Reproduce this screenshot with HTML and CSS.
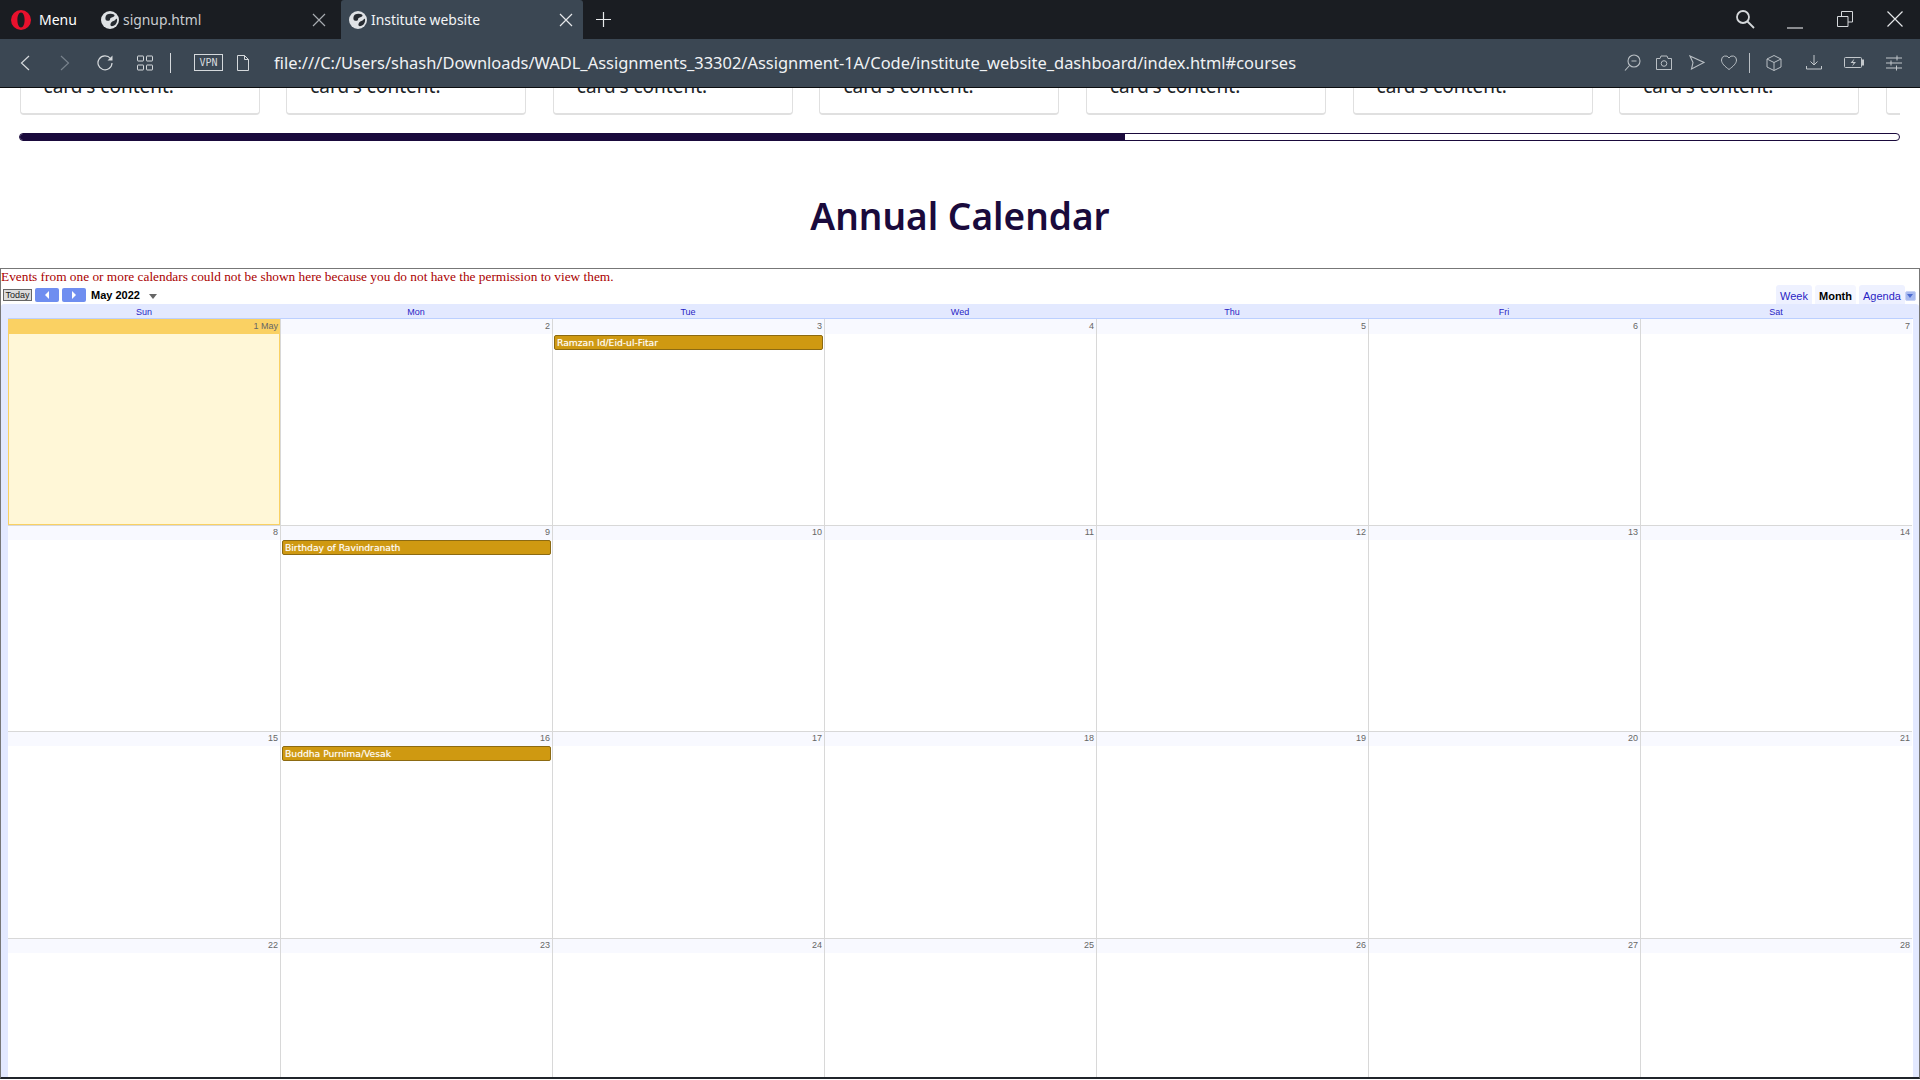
FILE: index.html
```html
<!DOCTYPE html>
<html lang="en">
<head>
<meta charset="UTF-8">
<meta name="viewport" content="width=device-width, initial-scale=1.0">
<title>Institute website</title>
<link rel="stylesheet" href="styles.css">
</head>
<body>
<svg class="defs" width="0" height="0">
    <symbol id="globe" viewBox="0 0 18 18">
        <circle cx="9" cy="9" r="9" fill="#dfe2e5"/>
        <path d="M6 3.500c2-1 5-1 7 0 1 1 .5 2-1 2.500-2 .5-3 1-3 2.500s-2 1.500-3.500 1C4 9 4 5 6 3.500zM16 8c.5 3-1 6-4 7-2 .5-3-.5-2.500-2s1-2.500 3-3 2.500-3 3.500-2z" fill="#262b31"/>
    </symbol>
    <symbol id="closeX" viewBox="0 0 14 14">
        <path d="M1 1l12 12M13 1L1 13" fill="none" stroke="currentColor" stroke-width="1.2"/>
    </symbol>
</svg>

<header class="tabbar">
    <div class="menu-btn">
        <svg class="opera" viewBox="0 0 20 20"><path fill-rule="evenodd" d="M10 0a10 10 0 1 0 0 20a10 10 0 0 0 0-20zM10 2.500c2.200 0 3.600 3.300 3.600 7.500s-1.400 7.500-3.600 7.500-3.600-3.300-3.600-7.500 1.400-7.500 3.600-7.500z" fill="#e8112d"/></svg>
        <span>Menu</span>
    </div>
    <div class="tab">
        <svg class="globe"><use href="#globe"/></svg>
        <span class="tab-title">signup.html</span>
        <svg class="tab-close"><use href="#closeX"/></svg>
    </div>
    <div class="tab active">
        <svg class="globe"><use href="#globe"/></svg>
        <span class="tab-title">Institute website</span>
        <svg class="tab-close"><use href="#closeX"/></svg>
    </div>
    <svg class="new-tab" viewBox="0 0 15 15"><path d="M7.500 0v15M0 7.500h15" stroke="#e8eaec" stroke-width="1.200" fill="none"/></svg>
    <div class="win-controls">
        <div class="win-btn"><svg width="20" height="20" viewBox="0 0 20 20"><circle cx="8" cy="8" r="6" fill="none" stroke="#d5d8db" stroke-width="1.8"/><path d="M12.500 12.500L19 19" stroke="#d5d8db" stroke-width="1.800"/></svg></div>
        <div class="win-btn"><svg class="min-icon" width="16" height="16" viewBox="0 0 16 16"><path d="M0 15h16" stroke="#d5d8db" stroke-width="1.200"/></svg></div>
        <div class="win-btn"><svg width="16" height="16" viewBox="0 0 16 16"><path d="M.5 5.500h10.500v10H.5zM4.500 5.500V.5h11v10.500H11" fill="none" stroke="#d5d8db"/></svg></div>
        <div class="win-btn"><svg width="16" height="16" viewBox="0 0 16 16"><path d="M.5.5l15 15M15.500.5l-15 15" fill="none" stroke="#e4e6e8" stroke-width="1.200"/></svg></div>
    </div>
</header>

<nav class="toolbar">
    <div class="nav-btn"><svg width="10" height="16" viewBox="0 0 10 16"><path d="M9 1L1.500 8 9 15" fill="none" stroke="#d5d9dc" stroke-width="1.200"/></svg></div>
    <div class="nav-btn"><svg width="10" height="16" viewBox="0 0 10 16"><path d="M1 1l7.500 7L1 15" fill="none" stroke="#78828c" stroke-width="1.200"/></svg></div>
    <div class="nav-btn"><svg width="16" height="16" viewBox="0 0 16 16"><path d="M13.500 3.500A7 7 0 1 0 15 8" fill="none" stroke="#d5d9dc" stroke-width="1.200"/><path d="M15.500 .5v5h-5z" fill="#d5d9dc"/></svg></div>
    <div class="nav-btn"><svg width="16" height="16" viewBox="0 0 16 16"><g fill="none" stroke="#d5d9dc"><rect x=".5" y="1" width="6" height="5" rx=".5"/><rect x="9.500" y="1" width="6" height="5" rx=".5"/><rect x=".5" y="10" width="6" height="5" rx=".5"/><rect x="9.500" y="10" width="6" height="5" rx=".5"/></g></svg></div>
    <span class="tool-sep first"></span>
    <span class="vpn">VPN</span>
    <svg class="doc-icon" width="12" height="16" viewBox="0 0 12 16"><path d="M.5.5h7l4 4v11H.5zM7.500.5v4h4" fill="none" stroke="#d5d9dc"/></svg>
    <span class="url">file:///C:/Users/shash/Downloads/WADL_Assignments_33302/Assignment-1A/Code/institute_website_dashboard/index.html#courses</span>
    <div class="tool-right">
        <div class="tool-btn"><svg width="17" height="17" viewBox="0 0 17 17"><g fill="none" stroke="#b9bfc4" stroke-width="1.100"><circle cx="10" cy="7" r="6"/><path d="M5.500 11.500L1 16.500M7.500 7h5"/></g></svg></div>
        <div class="tool-btn"><svg width="16" height="15" viewBox="0 0 16 15"><g fill="none" stroke="#b9bfc4"><path d="M.5 3.500h3.500l1-2.500h6l1 2.500h3.500v11H.5z"/><circle cx="8" cy="8.500" r="2.800"/></g></svg></div>
        <div class="tool-btn"><svg width="16" height="15" viewBox="0 0 16 15"><path d="M1 1l14 6.500L2.500 14 4 7.500z" fill="none" stroke="#b9bfc4" stroke-width="1.100"/></svg></div>
        <div class="tool-btn"><svg width="16" height="15" viewBox="0 0 16 15"><path d="M8 14.500C4 11.500.5 8.500.5 5A4 4 0 0 1 8 3a4 4 0 0 1 7.500 2c0 3.500-3.500 6.500-7.500 9.500z" fill="none" stroke="#b9bfc4"/></svg></div>
        <span class="tool-sep last"></span>
        <div class="tool-btn wide"><svg width="16" height="16" viewBox="0 0 16 16"><path d="M8 .5l7 3.500v8l-7 3.500L1 12V4zM1 4l7 3.500L15 4M8 7.500v8" fill="none" stroke="#b9bfc4"/></svg></div>
        <div class="tool-btn wide"><svg width="16" height="15" viewBox="0 0 16 15"><path d="M8 0v10M4.500 6.500L8 10l3.500-3.500M.5 11v3h15v-3" fill="none" stroke="#c3c8cc"/></svg></div>
        <div class="tool-btn wide"><svg width="20" height="11" viewBox="0 0 20 11"><rect x=".5" y=".5" width="17" height="10" rx="1" fill="none" stroke="#c3c8cc"/><rect x="18" y="2.500" width="2" height="6" fill="#c3c8cc"/><path d="M10.500 1.500L6.500 6h3L8 9.500 12 5H9z" fill="#c3c8cc"/></svg></div>
        <div class="tool-btn wide"><svg width="16" height="16" viewBox="0 0 16 16"><path d="M0 3h16M0 8h16M0 13h16M11 .5v5M5 5.500v5M10.500 10.500v5" fill="none" stroke="#c3c8cc"/></svg></div>
    </div>
</nav>

<main class="page">
    <div class="cards">
        <div class="card"><p>card's content.</p></div>
        <div class="card"><p>card's content.</p></div>
        <div class="card"><p>card's content.</p></div>
        <div class="card"><p>card's content.</p></div>
        <div class="card"><p>card's content.</p></div>
        <div class="card"><p>card's content.</p></div>
        <div class="card"><p>card's content.</p></div>
        <div class="card"><p>card's content.</p></div>
    </div>
    <div class="scroll-track"><div class="scroll-thumb"></div></div>

    <h1>Annual Calendar</h1>

    <section class="cal-frame">
        <div class="cal-error">Events from one or more calendars could not be shown here because you do not have the permission to view them.</div>
        <div class="cal-nav">
            <button class="today-btn">Today</button>
            <button class="arrow-btn"><span class="arrow left"></span></button>
            <button class="arrow-btn"><span class="arrow right"></span></button>
            <span class="cal-month">May 2022</span>
            <span class="month-drop"></span>
            <div class="view-tabs">
                <span class="view-tab week">Week</span>
                <span class="view-tab month">Month</span>
                <span class="view-tab agenda">Agenda</span>
                <span class="view-drop"></span>
            </div>
        </div>
        <div class="cal-body">
            <div class="day-names">
                <span>Sun</span><span>Mon</span><span>Tue</span><span>Wed</span><span>Thu</span><span>Fri</span><span>Sat</span>
            </div>
            <div class="month-grid">
                <div class="day today"><div class="date">1 May</div></div>
                <div class="day"><div class="date">2</div></div>
                <div class="day"><div class="date">3</div><div class="event">Ramzan Id/Eid-ul-Fitar</div></div>
                <div class="day"><div class="date">4</div></div>
                <div class="day"><div class="date">5</div></div>
                <div class="day"><div class="date">6</div></div>
                <div class="day"><div class="date">7</div></div>

                <div class="day"><div class="date">8</div></div>
                <div class="day"><div class="date">9</div><div class="event">Birthday of Ravindranath</div></div>
                <div class="day"><div class="date">10</div></div>
                <div class="day"><div class="date">11</div></div>
                <div class="day"><div class="date">12</div></div>
                <div class="day"><div class="date">13</div></div>
                <div class="day"><div class="date">14</div></div>

                <div class="day"><div class="date">15</div></div>
                <div class="day"><div class="date">16</div><div class="event">Buddha Purnima/Vesak</div></div>
                <div class="day"><div class="date">17</div></div>
                <div class="day"><div class="date">18</div></div>
                <div class="day"><div class="date">19</div></div>
                <div class="day"><div class="date">20</div></div>
                <div class="day"><div class="date">21</div></div>

                <div class="day"><div class="date">22</div></div>
                <div class="day"><div class="date">23</div></div>
                <div class="day"><div class="date">24</div></div>
                <div class="day"><div class="date">25</div></div>
                <div class="day"><div class="date">26</div></div>
                <div class="day"><div class="date">27</div></div>
                <div class="day"><div class="date">28</div></div>
            </div>
        </div>
    </section>
</main>
</body>
</html>
```

FILE: styles.css
```css
* {
    box-sizing: border-box;
}
html, body {
    height: 100%;
}
body {
    margin: 0;
    overflow: hidden;
    background: #fff;
    font-family: "Noto Sans", "Open Sans", sans-serif;
}
.defs {
    display: block;
    height: 0;
}

/* browser chrome */
.tabbar {
    display: flex;
    align-items: center;
    height: 39px;
    background: #1a1d22;
    color: #fff;
}
.menu-btn {
    display: flex;
    align-items: center;
    width: 93px;
    height: 39px;
    padding-left: 11px;
    font-size: 14px;
}
.menu-btn span {
    padding-bottom: 1px;
}
.opera {
    width: 20px;
    height: 20px;
    margin-right: 8px;
}
.tab {
    display: flex;
    align-items: center;
    width: 243px;
    height: 39px;
    margin-right: 5px;
    padding: 0 10px 0 8px;
    font-size: 13.9px;
    color: #c9ccd0;
}
.tab.active {
    width: 242px;
    margin-right: 0;
    background: #3b4753;
    border-radius: 3px 3px 0 0;
    color: #f2f4f6;
}
.globe {
    width: 18px;
    height: 18px;
    margin-right: 4px;
    flex: none;
}
.tab-title {
    flex: 1;
    padding-bottom: 1px;
    white-space: nowrap;
}
.tab-close {
    width: 14px;
    height: 14px;
    color: #a7abb0;
}
.tab.active .tab-close {
    color: #e6e8ea;
}
.new-tab {
    width: 15px;
    height: 15px;
    margin-left: 13px;
}
.win-controls {
    display: flex;
    margin-left: auto;
    height: 39px;
}
.win-btn {
    display: flex;
    align-items: center;
    justify-content: center;
    width: 50px;
    height: 37px;
}
.min-icon {
    margin-top: 4px;
}

.toolbar {
    display: flex;
    align-items: center;
    height: 49px;
    padding: 0 6px 1px 5px;
    background: #3b4753;
    border-bottom: 1px solid #0c0e10;
    color: #f0f2f4;
}
.nav-btn {
    display: flex;
    align-items: center;
    justify-content: center;
    width: 40px;
    height: 20px;
}
.tool-sep {
    width: 1px;
    height: 20px;
    background: #d5d9dc;
}
.tool-sep.first {
    margin-left: 5px;
}
.tool-sep.last {
    margin-left: 4px;
    margin-right: 4px;
    background: #b9bfc4;
}
.vpn {
    width: 29px;
    height: 17px;
    margin-left: 23px;
    border: 1px solid #d5d9dc;
    font-family: "DejaVu Sans Mono", monospace;
    font-size: 10px;
    line-height: 15px;
    text-align: center;
    color: #d5d9dc;
}
.doc-icon {
    margin-left: 14px;
}
.url {
    margin-left: 25px;
    padding-bottom: 1px;
    font-size: 16.45px;
    white-space: nowrap;
}
.tool-right {
    display: flex;
    align-items: center;
    margin-left: auto;
}
.tool-btn {
    display: flex;
    align-items: center;
    justify-content: center;
    width: 32.25px;
    height: 20px;
}
.tool-btn.wide {
    width: 40px;
}

/* page, scrolled down past the card tops */
.page {
    height: 992px;
    overflow: hidden;
}
.cards {
    display: flex;
    align-items: flex-end;
    gap: 26.6px;
    width: 1880.5px;
    height: 27px;
    margin-left: 19.6px;
    overflow: hidden;
}
.card {
    flex: none;
    width: 240px;
    padding: 0 23px 13px;
    background: #fff;
    border: 1px solid #e0e0e0;
    border-bottom-width: 2px;
    border-radius: 4px;
}
.card p {
    margin: 0;
    font-size: 19px;
    line-height: 28px;
    color: #212529;
    white-space: nowrap;
}
.scroll-track {
    width: 1881px;
    height: 8px;
    margin: 18px 0 0 19px;
    border: 1px solid #1a0a3c;
    border-radius: 4px;
    overflow: hidden;
}
.scroll-thumb {
    width: 58.8%;
    height: 100%;
    background: #1a0a3c;
}
h1 {
    margin: 47px 0 0;
    font-size: 37px;
    font-weight: 600;
    line-height: 56px;
    text-align: center;
    color: #1a0a3c;
}

/* embedded calendar */
.cal-frame {
    height: 811px;
    margin-top: 24px;
    border: 1px solid #777;
    border-bottom: 2px solid #20242a;
    overflow: hidden;
    font-family: "Liberation Sans", Arial, sans-serif;
}
.cal-error {
    height: 15px;
    padding-top: 1px;
    font-family: "Liberation Serif", "Times New Roman", serif;
    font-size: 13.33px;
    line-height: 14px;
    color: #a00;
    white-space: nowrap;
}
.cal-nav {
    display: flex;
    align-items: center;
    height: 20px;
    padding: 2px 0 0 2px;
}
.today-btn {
    width: 29px;
    height: 12px;
    padding: 0;
    background: #ddd;
    border: 1px solid #666;
    font-family: inherit;
    font-size: 9px;
    line-height: 10px;
    color: #222;
}
.arrow-btn {
    display: flex;
    align-items: center;
    justify-content: center;
    width: 24px;
    height: 14px;
    margin-left: 3px;
    padding: 0;
    background: #6f8ef0;
    border: none;
    border-radius: 2px;
}
.arrow-btn + .arrow-btn {
    margin-left: 3px;
}
.arrow {
    width: 0;
    height: 0;
    border-top: 4px solid transparent;
    border-bottom: 4px solid transparent;
}
.arrow.left {
    border-right: 4px solid #fff;
}
.arrow.right {
    border-left: 4px solid #fff;
}
.cal-month {
    margin-left: 5px;
    font-size: 11px;
    font-weight: bold;
    color: #000;
}
.month-drop {
    width: 0;
    height: 0;
    margin: 2px 0 0 9px;
    border-top: 5px solid #666;
    border-left: 4px solid transparent;
    border-right: 4px solid transparent;
}
.view-tabs {
    display: flex;
    align-items: flex-end;
    gap: 3px;
    height: 18px;
    margin-left: auto;
    padding-right: 3px;
}
.view-tab {
    height: 19px;
    padding-top: 4px;
    background: #eef1ff;
    border-radius: 3px 3px 0 0;
    font-size: 11px;
    line-height: 14px;
    text-align: center;
    color: #2a1fc4;
}
.view-tab.week {
    width: 36px;
}
.view-tab.month {
    width: 41px;
    font-weight: bold;
    color: #000;
    background: #f4f6ff;
}
.view-tab.agenda {
    width: 46px;
}
.view-drop {
    width: 11px;
    height: 10px;
    margin: 0 0 3px -3px;
    background: #a9bbf0;
    border: 1px solid #c9d4f5;
    border-radius: 2px;
    position: relative;
}
.view-drop::after {
    content: "";
    position: absolute;
    left: 1px;
    top: 2px;
    border-top: 4px solid #4a6ad0;
    border-left: 3px solid transparent;
    border-right: 3px solid transparent;
}
.cal-body {
    height: 774px;
    padding: 0 6px 0 7px;
    background: #e3e9ff;
    border-radius: 3px 3px 0 0;
}
.day-names {
    display: grid;
    grid-template-columns: repeat(7, 272px);
    height: 14px;
    font-size: 9px;
    line-height: 17px;
    text-align: center;
    color: #2a1fc4;
}
.month-grid {
    display: grid;
    grid-template-columns: repeat(7, 272px);
    grid-auto-rows: 206.2px;
    background: #fff;
    border-top: 1px solid #bcd0ff;
}
.day {
    border-left: 1px solid #d8d8d8;
    border-top: 1px solid #d8d8d8;
    background: #fff;
}
.day:nth-child(7n+1) {
    border-left: none;
}
.day:nth-child(-n+7) {
    border-top: none;
}
.date {
    height: 14px;
    padding-right: 2px;
    background: #f8f9ff;
    font-size: 9px;
    line-height: 12px;
    text-align: right;
    color: #666;
}
.day:nth-child(-n+7) .date {
    height: 15px;
    line-height: 14px;
}
.day.today {
    background: #fff7d7;
    border: 1px solid #fad163;
    border-top: none;
}
.day.today .date {
    margin: 0 -1px 0 -1px;
    background: #fad163;
}
.event {
    height: 15px;
    margin: 0 1px;
    padding-left: 2px;
    background: #cf9911;
    border: 1px solid #8c6a12;
    border-radius: 2px;
    font-family: "DejaVu Sans", Verdana, sans-serif;
    font-size: 9.2px;
    line-height: 13px;
    color: #fff;
    text-shadow: 0 0 1px rgba(255,255,255,0.5);
    white-space: nowrap;
}
.day:nth-child(-n+7) .event {
    margin-top: 1px;
    line-height: 14px;
}
```
